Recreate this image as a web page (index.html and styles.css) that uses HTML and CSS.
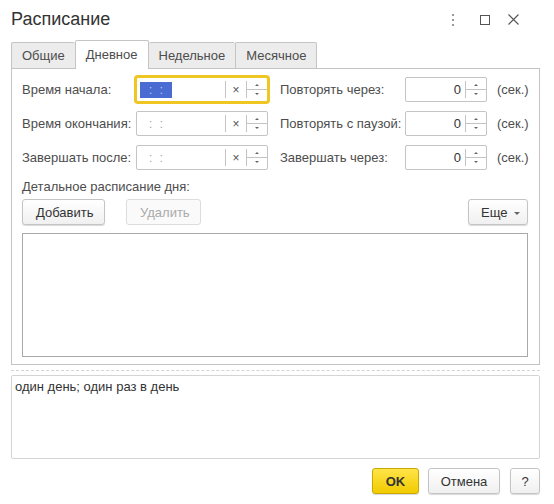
FILE: index.html
```html
<!DOCTYPE html>
<html lang="ru">
<head>
    <meta charset="UTF-8">
    <meta name="viewport" content="width=device-width, initial-scale=1.0">
    <title>Расписание</title>
    <link rel="stylesheet" href="styles.css">
</head>
<body>
    <div class="window">
        <div class="header">
            <div class="title">Расписание</div>
            <div class="header-icons">
                <svg class="icon dots" width="4" height="12" viewBox="0 0 4 12">
                    <rect x="1" y="0" width="2" height="2" fill="#999"/>
                    <rect x="1" y="5" width="2" height="2" fill="#999"/>
                    <rect x="1" y="10" width="2" height="2" fill="#999"/>
                </svg>
                <svg class="icon max" width="10" height="10" viewBox="0 0 10 10">
                    <rect x="0.5" y="0.5" width="9" height="9" fill="none" stroke="#555"/>
                </svg>
                <svg class="icon close" width="11" height="11" viewBox="0 0 11 11">
                    <path d="M0.5 0.5 L10.5 10.5 M10.5 0.5 L0.5 10.5" stroke="#555" stroke-width="1.1"/>
                </svg>
            </div>
        </div>

        <div class="tabs">
            <div class="tab">Общие</div>
            <div class="tab active">Дневное</div>
            <div class="tab">Недельное</div>
            <div class="tab">Месячное</div>
        </div>

        <div class="panel">
            <div class="form-grid">
                <div class="label">Время начала:</div>
                <div class="field time focused">
                    <div class="field-text"><span class="time-value selected"> :  : </span></div>
                    <div class="clear-btn">×</div>
                    <div class="spin">
                        <span class="arrow up"></span>
                        <span class="spin-line"></span>
                        <span class="arrow down"></span>
                    </div>
                </div>
                <div class="label right">Повторять через:</div>
                <div class="field number">
                    <div class="field-text num">0</div>
                    <div class="spin">
                        <span class="arrow up"></span>
                        <span class="spin-line"></span>
                        <span class="arrow down"></span>
                    </div>
                </div>
                <div class="unit">(сек.)</div>

                <div class="label">Время окончания:</div>
                <div class="field time">
                    <div class="field-text"><span class="time-value"> :  : </span></div>
                    <div class="clear-btn">×</div>
                    <div class="spin">
                        <span class="arrow up"></span>
                        <span class="spin-line"></span>
                        <span class="arrow down"></span>
                    </div>
                </div>
                <div class="label right">Повторять с паузой:</div>
                <div class="field number">
                    <div class="field-text num">0</div>
                    <div class="spin">
                        <span class="arrow up"></span>
                        <span class="spin-line"></span>
                        <span class="arrow down"></span>
                    </div>
                </div>
                <div class="unit">(сек.)</div>

                <div class="label">Завершать после:</div>
                <div class="field time">
                    <div class="field-text"><span class="time-value"> :  : </span></div>
                    <div class="clear-btn">×</div>
                    <div class="spin">
                        <span class="arrow up"></span>
                        <span class="spin-line"></span>
                        <span class="arrow down"></span>
                    </div>
                </div>
                <div class="label right">Завершать через:</div>
                <div class="field number">
                    <div class="field-text num">0</div>
                    <div class="spin">
                        <span class="arrow up"></span>
                        <span class="spin-line"></span>
                        <span class="arrow down"></span>
                    </div>
                </div>
                <div class="unit">(сек.)</div>
            </div>

            <div class="section-label">Детальное расписание дня:</div>

            <div class="toolbar">
                <button class="btn add-btn">Добавить</button>
                <button class="btn del-btn" disabled>Удалить</button>
                <button class="btn more-btn">Еще <span class="caret"></span></button>
            </div>

            <div class="list-box"></div>
        </div>

        <div class="separator"></div>

        <div class="summary">один день; один раз в день</div>

        <div class="footer">
            <button class="btn ok-btn">OK</button>
            <button class="btn cancel-btn">Отмена</button>
            <button class="btn help-btn">?</button>
        </div>
    </div>
</body>
</html>
```

FILE: styles.css
```css
body {
    margin: 0;
    font-family: "Liberation Sans", Arial, sans-serif;
    font-size: 13px;
    color: #4d4d4d;
    background-color: #fff;
}

.window {
    width: 554px;
    height: 504px;
    box-sizing: border-box;
    padding: 0 14px 0 11px;
}

.header {
    height: 39px;
    display: flex;
    align-items: center;
    justify-content: space-between;
}

.title {
    font-size: 18px;
    color: #333;
}

.header-icons {
    display: flex;
    align-items: center;
    margin-right: 21px;
}

.icon {
    display: block;
}

.icon.max {
    margin-left: 25px;
}

.icon.close {
    margin-left: 18px;
}

.tabs {
    display: flex;
    align-items: flex-end;
    height: 29px;
}

.tab {
    height: 26px;
    line-height: 26px;
    box-sizing: border-box;
    padding: 0 10px;
    border: 1px solid #c4c4c4;
    border-right: none;
    border-bottom: none;
    border-radius: 2px 2px 0 0;
    background: #ececec;
    color: #4d4d4d;
}

.tab:last-child {
    border-right: 1px solid #c4c4c4;
}

.tab.active {
    height: 29px;
    line-height: 28px;
    background: #fff;
    position: relative;
    margin-bottom: -1px;
    border-right: 1px solid #c4c4c4;
}

.tab.active + .tab {
    border-left: none;
}

.panel {
    border: 1px solid #c4c4c4;
    height: 297px;
    box-sizing: border-box;
    padding: 8px 11px 0 10px;
}

.form-grid {
    display: grid;
    grid-template-columns: 114px 144px 125px 92px auto;
    grid-auto-rows: 25px;
    row-gap: 9px;
    align-items: center;
}

.label {
    white-space: nowrap;
}

.field {
    display: flex;
    height: 25px;
    box-sizing: border-box;
    border: 1px solid #c4c4c4;
    border-radius: 2px;
    background: #fff;
}

.field.time {
    width: 132px;
}

.field.number {
    width: 82px;
}

.field.focused {
    border-color: #f0c623;
    box-shadow: 0 0 0 2px #f0c623;
}

.field-text {
    flex: 1;
    display: flex;
    align-items: center;
    padding-left: 3px;
}

.field-text.num {
    justify-content: flex-end;
    padding-right: 4px;
    color: #333;
}

.time-value {
    display: inline-block;
    width: 32px;
    height: 16px;
    line-height: 16px;
    white-space: pre;
    text-align: center;
    color: #aaa;
}

.time-value.selected {
    background: #4a6bd2;
    color: #b8c6f0;
}

.clear-btn {
    width: 20px;
    margin: 3px 0;
    border-left: 1px solid #c4c4c4;
    display: flex;
    align-items: center;
    justify-content: center;
    font-size: 12px;
    color: #555;
}

.spin {
    width: 20px;
    margin: 3px 0;
    border-left: 1px solid #c4c4c4;
    display: flex;
    flex-direction: column;
    align-items: center;
    justify-content: space-between;
}

.spin-line {
    width: 100%;
    height: 1px;
    background: #c4c4c4;
}

.arrow {
    width: 0;
    height: 0;
    border-left: 2px solid transparent;
    border-right: 2px solid transparent;
    margin: 3px 0;
}

.arrow.up {
    border-bottom: 2px solid #666;
}

.arrow.down {
    border-top: 2px solid #666;
}

.unit {
    white-space: nowrap;
}

.section-label {
    margin-top: 9px;
    line-height: 16px;
}

.toolbar {
    display: flex;
    margin-top: 4px;
}

.btn {
    height: 26px;
    box-sizing: border-box;
    padding: 0 13px;
    font-family: "Liberation Sans", Arial, sans-serif;
    font-size: 13px;
    color: #333;
    border: 1px solid #c4c4c4;
    border-radius: 3px;
    background: linear-gradient(to bottom, #fff, #f0f0f0);
    box-shadow: 0 1px 1px rgba(0, 0, 0, 0.15);
    cursor: pointer;
}

.add-btn {
    width: 83px;
}

.del-btn {
    width: 75px;
    margin-left: 21px;
    color: #aaa;
    border-color: #dcdcdc;
    box-shadow: none;
    background: #fafafa;
}

.more-btn {
    margin-left: auto;
    width: 60px;
    padding: 0 6px 0 12px;
    text-align: left;
}

.caret {
    display: inline-block;
    width: 0;
    height: 0;
    border-left: 3px solid transparent;
    border-right: 3px solid transparent;
    border-top: 3px solid #666;
    vertical-align: middle;
    margin-left: 3px;
}

.list-box {
    margin-top: 8px;
    height: 122px;
    border: 1px solid #a9a9a9;
}

.separator {
    margin-top: 5px;
    border-top: 1px dashed #d4d4d4;
}

.summary {
    margin-top: 4px;
    height: 84px;
    box-sizing: border-box;
    border: 1px solid #d4d4d4;
    border-radius: 2px;
    padding: 3px 3px;
    color: #333;
}

.footer {
    display: flex;
    justify-content: flex-end;
    margin-top: 9px;
}

.ok-btn {
    width: 47px;
    padding: 0;
    font-weight: bold;
    border-color: #c8a900;
    background: linear-gradient(to bottom, #ffe448, #f2cb00);
}

.cancel-btn {
    width: 72px;
    padding: 0;
    margin-left: 9px;
}

.help-btn {
    width: 30px;
    padding: 0;
    margin-left: 10px;
}
```
